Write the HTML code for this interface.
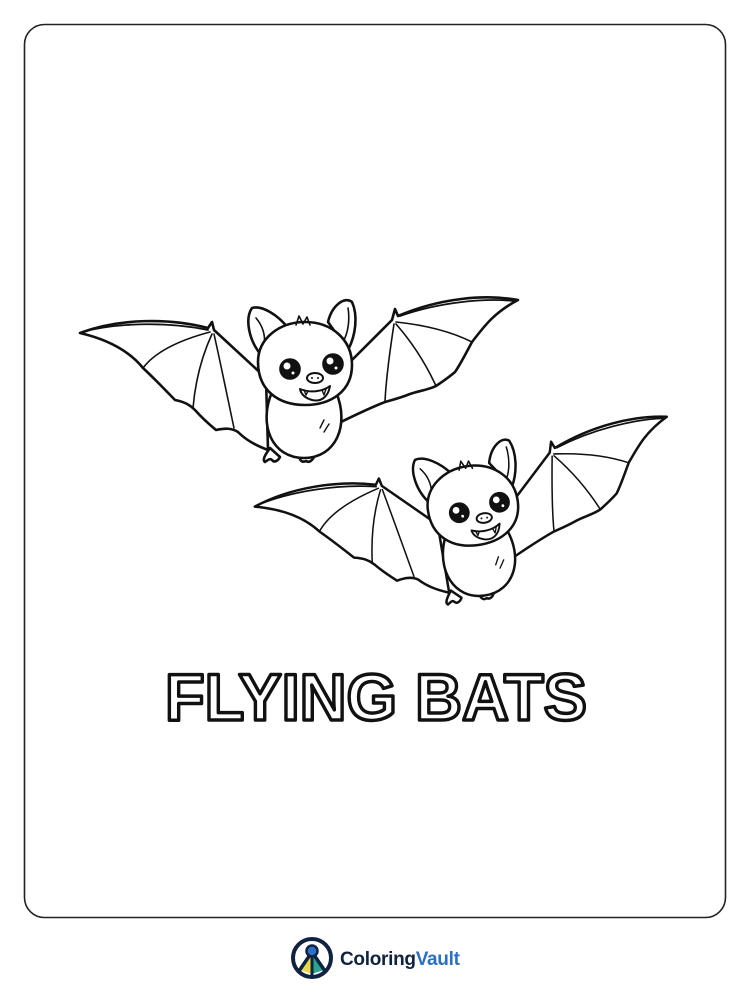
<!DOCTYPE html>
<html><head><meta charset="utf-8"><style>
html,body{margin:0;padding:0;background:#fff;}
body{width:750px;height:1000px;position:relative;overflow:hidden;font-family:"Liberation Sans",sans-serif;}
</style></head><body>
<svg width="750" height="1000" viewBox="0 0 750 1000" xmlns="http://www.w3.org/2000/svg">
<rect x="24.5" y="24.5" width="701" height="893" rx="20" fill="#fff" stroke="#222" stroke-width="1.6"/>
<defs>
<g id="bat" fill="#fff" stroke="#111" stroke-width="2.6" stroke-linejoin="round" stroke-linecap="round">
  <path d="M266,378 L214,330 L212,322 L208,328 C170,318 120,318 80,333 C110,340 130,352 143,368 C158,382 170,395 175,400 C185,402 190,405 195,410 C202,418 210,425 216,430 C225,428 232,428 238,432 C246,440 255,445 268,450 Z"/>
  <path d="M82,332 C120,322 170,322 208,330" fill="none" stroke-width="1.8"/>
  <path d="M210,332 C180,340 155,352 143,368 M212,334 C200,360 195,385 193,408 M214,334 C222,370 228,400 234,428" fill="none" stroke-width="1.6"/>
  <path d="M340,372 L392,320 L395,309 L398,316 C440,298 485,294 518,300 C495,312 485,325 472,342 C465,355 460,365 455,372 C448,378 442,382 436,386 C428,390 418,391 410,394 C400,398 392,400 385,402 C370,408 355,415 335,425 Z"/>
  <path d="M400,316 C440,302 485,298 514,301" fill="none" stroke-width="1.8"/>
  <path d="M396,322 C425,325 452,332 472,342 M396,324 C410,340 425,362 436,386 M394,324 C390,350 386,378 385,402" fill="none" stroke-width="1.6"/>
  <path d="M262,356 C248,340 245,318 252,308 C262,305 278,315 288,328 Z"/>
  <path d="M256,318 C262,325 266,335 264,345 M264,345 L270,338" fill="none" stroke-width="1.6"/>
  <path d="M328,322 C332,305 345,296 352,302 C358,315 356,335 348,350 Z"/>
  <path d="M348,308 C350,320 348,332 344,340 L338,334" fill="none" stroke-width="1.6"/>
  <path d="M270,448 C265,455 262,460 265,462 C268,460 270,458 272,460 C274,463 278,461 280,457 Z"/>
  <path d="M300,453 C298,460 302,463 306,461 C309,463 313,461 315,454 Z"/>
  <path d="M272,392 C258,425 272,458 304,458 C336,458 350,425 336,392"/>
  <path d="M320,428 L324,420 M324,432 L329,424" stroke-width="1.4" fill="none"/>
  <path d="M258,362 C258,338 280,322 305,322 C332,322 352,340 352,365 C352,392 330,405 305,405 C278,405 258,390 258,362 Z"/>
  <path d="M296,325 L299,316 L303,324 L307,317 L310,325" fill="none" stroke-width="1.6"/>
  <circle cx="290" cy="369" r="9.5" fill="#111"/>
  <circle cx="333" cy="364" r="9.5" fill="#111"/>
  <circle cx="287" cy="366" r="3.5" fill="#fff" stroke="none"/>
  <circle cx="330" cy="361" r="3.5" fill="#fff" stroke="none"/>
  <circle cx="293" cy="373" r="1.5" fill="#fff" stroke="none"/>
  <circle cx="336" cy="368" r="1.5" fill="#fff" stroke="none"/>
  <ellipse cx="315" cy="378" rx="8" ry="5" stroke-width="2"/>
  <circle cx="312" cy="378" r="1" fill="#111" stroke="none"/>
  <circle cx="318" cy="378" r="1" fill="#111" stroke="none"/>
  <path d="M300,389 C310,393 322,392 330,386 C328,398 320,402 312,400 C305,398 301,394 300,389 Z" stroke-width="2"/>
  <path d="M304,390 L306,395 L308,391 M322,390 L324,395 L326,389" fill="none" stroke-width="1.4"/>
</g>
</defs>
<use href="#bat"/>
<use href="#bat" transform="translate(470,520) rotate(-8) scale(0.96) translate(-300,-378)"/>
<text x="165" y="720" textLength="422" lengthAdjust="spacingAndGlyphs" font-family="Liberation Sans, sans-serif" font-weight="bold" font-size="66" fill="#fff" stroke="#111" stroke-width="3.5" stroke-linejoin="round">FLYING BATS</text>
<g transform="translate(312,958)">
  <circle r="19" fill="#fff" stroke="#0f2340" stroke-width="4"/>
  <path d="M-12,12 L0,-6 L0,16 Z" fill="#e9d84a"/>
  <path d="M12,12 L0,-6 L0,16 Z" fill="#2aa58f"/>
  <path d="M-13,13 L0,-6 L13,13" fill="none" stroke="#0f2340" stroke-width="3.5"/>
  <line x1="0" y1="-6" x2="0" y2="17" stroke="#0f2340" stroke-width="3"/>
  <circle cx="0" cy="-7" r="5.5" fill="#2a70c8" stroke="#0f2340" stroke-width="2.5"/>
</g>
<text x="340" y="965" font-family="Liberation Sans, sans-serif" font-weight="bold" font-size="19" fill="#0f2340" letter-spacing="-0.3">Coloring<tspan fill="#2a70c8">Vault</tspan></text>
</svg>
</body></html>
